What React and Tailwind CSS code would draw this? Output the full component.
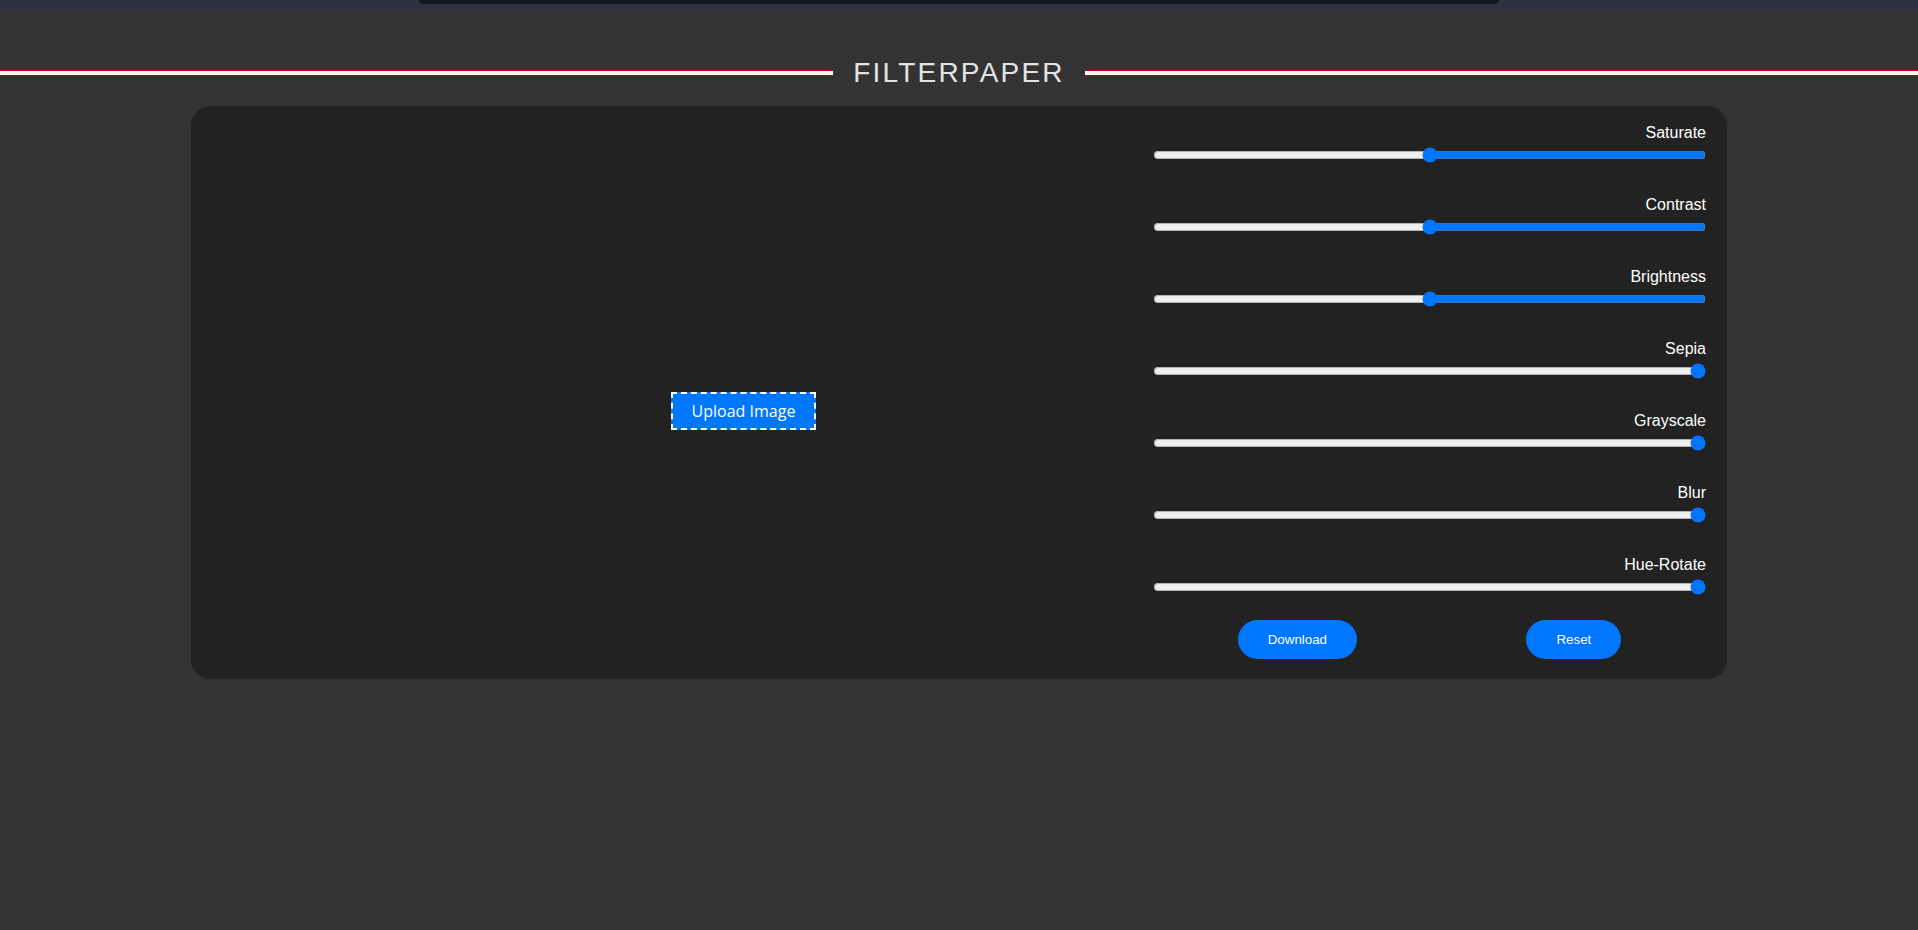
import React from 'react';

const filters = [
  { name: 'Saturate', max: 200, value: 100 },
  { name: 'Contrast', max: 200, value: 100 },
  { name: 'Brightness', max: 200, value: 100 },
  { name: 'Sepia', max: 100, value: 0 },
  { name: 'Grayscale', max: 100, value: 0 },
  { name: 'Blur', max: 10, value: 0 },
  { name: 'Hue-Rotate', max: 360, value: 0 },
];

export default function App() {
  return (
    <div className="min-h-[930px] bg-[#333333] font-['Liberation_Sans',Arial,sans-serif]">
      {/* top strip */}
      <div className="h-[10px] bg-[#2e3142] flex justify-center">
        <div className="w-[1080px] h-[4px] bg-[#16181e] rounded-b-[4px]" />
      </div>

      <div className="flex items-center h-[32px] mt-[47px] mb-[17px]">
        <div className="flex-1 h-[6px] bg-white border-y border-[#c80000]" />
        <h1 className="px-[20px] text-[28px] leading-[32px] tracking-[2.2px] text-[#e3e3e3]">FILTERPAPER</h1>
        <div className="flex-1 h-[6px] bg-white border-y border-[#c80000]" />
      </div>

      <div className="w-[1536px] mx-auto bg-[#222222] rounded-[20px] flex">
        <div className="flex-1 flex items-center justify-center pl-[143px] pt-[36px]">
          <button className="w-[145px] h-[38px] bg-[#0077ff] border-2 border-dashed border-white text-white text-[16px] font-['Open_Sans',sans-serif]">
            Upload Image
          </button>
        </div>

        <div className="w-[553px] mr-[21px] pt-[18px] pb-[20px] flex flex-col">
          <div className="flex flex-col gap-[33px]">
            {filters.map((f) => (
              <div key={f.name} className="flex flex-col">
                <div className="h-[18px] leading-[18px] text-right text-[16px] text-white">{f.name}</div>
                <input
                  type="range"
                  dir="rtl"
                  min="0"
                  max={f.max}
                  defaultValue={f.value}
                  className="w-full h-4 mt-[5px]"
                />
              </div>
            ))}
          </div>
          <div className="flex justify-around mt-[25px]">
            <button className="h-[39px] px-[30px] rounded-full bg-[#0077ff] text-white text-[13.33px]">Download</button>
            <button className="h-[39px] px-[30px] rounded-full bg-[#0077ff] text-white text-[13.33px]">Reset</button>
          </div>
        </div>
      </div>
    </div>
  );
}
